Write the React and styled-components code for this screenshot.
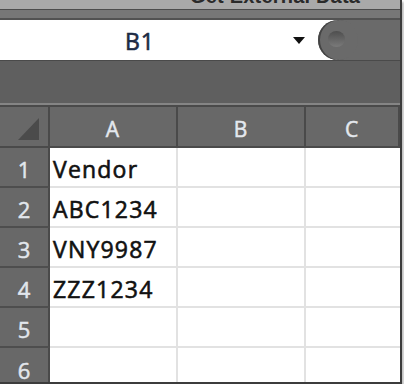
import React from 'react'
import styled, { createGlobalStyle } from 'styled-components'

const GlobalStyle = createGlobalStyle`
  html, body { margin: 0; padding: 0; background: #ffffff; }
  body { font-family: "Open Sans", "Liberation Sans", sans-serif; }
`

const columns = ['A', 'B', 'C']
const rows = [
  { n: 1, a: 'Vendor' },
  { n: 2, a: 'ABC1234' },
  { n: 3, a: 'VNY9987' },
  { n: 4, a: 'ZZZ1234' },
  { n: 5, a: '' },
  { n: 6, a: '' },
]

function App() {
  return (
    <>
      <GlobalStyle />
      <Frame>
        <TitleStrip>
          <TitleText>Get External Data</TitleText>
        </TitleStrip>
        <RibbonBand />
        <NameRow>
          <NameBox>
            <CellRef>B1</CellRef>
            <DropArrow />
          </NameBox>
          <RoundButton>
            <Knob />
          </RoundButton>
        </NameRow>
        <FormulaBand />
        <Sheet>
          <Corner>
            <svg width="22" height="23" viewBox="0 0 22 23">
              <polygon points="21,0 21,22 0,22" fill="#4b4b4b" />
            </svg>
          </Corner>
          {columns.map(c => (
            <ColHead key={c}>{c}</ColHead>
          ))}
          {rows.map(r => (
            <React.Fragment key={r.n}>
              <RowHead last={r.n === 6}>{r.n}</RowHead>
              <Cell last={r.n === 6}>{r.a}</Cell>
              <Cell last={r.n === 6} />
              <Cell last={r.n === 6} edge />
            </React.Fragment>
          ))}
        </Sheet>
      </Frame>
    </>
  )
}

export default App

const Frame = styled.div`
  width: 400px;
  height: 382px;
  display: flex;
  flex-direction: column;
  overflow: hidden;
  border-right: 2px solid #3c3c3c;
  border-bottom: 2px solid #3c3c3c;
  box-shadow: 2px 2px 2px rgba(0, 0, 0, 0.25);
  background: #686868;
  & > * { flex-shrink: 0; }
`

const TitleStrip = styled.div`
  height: 9px;
  background: #a9a9a9;
  border-bottom: 1px solid #4c4c4c;
  overflow: hidden;
`

const TitleText = styled.div`
  margin: -16px 0 0 190px;
  font-family: "Liberation Sans", sans-serif;
  font-weight: bold;
  font-size: 20px;
  line-height: 24px;
  color: #2a2a2a;
  letter-spacing: 0.2px;
  white-space: nowrap;
`

const RibbonBand = styled.div`
  height: 8px;
  background: #777777;
  border-bottom: 2px solid #525252;
`

const NameRow = styled.div`
  height: 40px;
  display: flex;
  background: #6a6a6a;
  border-bottom: 1px solid #4a4a4a;
`

const NameBox = styled.div`
  width: 338px;
  background: #ffffff;
  display: flex;
  align-items: center;
`

const CellRef = styled.div`
  width: 280px;
  text-align: center;
  font-size: 23px;
  letter-spacing: 1px;
  color: #1d2b45;
  -webkit-text-stroke: 0.6px #1d2b45;
  padding-top: 1px;
`

const DropArrow = styled.div`
  margin-left: 13px;
  width: 0;
  height: 0;
  border-left: 6px solid transparent;
  border-right: 6px solid transparent;
  border-top: 7px solid #111;
`

const RoundButton = styled.div`
  width: 40px;
  height: 40px;
  margin-left: -20px;
  border-radius: 50%;
  background: #6a6a6a;
  box-shadow: inset 2px 0 0 #444;
  display: flex;
  align-items: center;
  justify-content: center;
  z-index: 1;
`

const Knob = styled.div`
  width: 17px;
  height: 16px;
  margin: -3px 0 0 -4px;
  border-radius: 50%;
  background: linear-gradient(#4e4e4e, #7a7a7a);
`

const FormulaBand = styled.div`
  height: 42px;
  background: #5f5f5f;
  border-bottom: 2px solid #858585;
`

const Sheet = styled.div`
  height: 275px;
  overflow: hidden;
  display: grid;
  grid-template-columns: 50px 128px 128px 1fr;
  grid-template-rows: 41px repeat(6, 40px);
  background: #ffffff;
  border-top: 2px solid #4a4a4a;
`

const Corner = styled.div`
  background: #686868;
  border-right: 2px solid #4a4a4a;
  border-bottom: 2px solid #4a4a4a;
  display: flex;
  align-items: flex-end;
  justify-content: flex-end;
  padding: 0 8px 5px 0;
`

const ColHead = styled.div`
  background: #686868;
  border-right: 2px solid #4a4a4a;
  border-bottom: 2px solid #4a4a4a;
  color: #e4e8ee;
  -webkit-text-stroke: 0.5px #e4e8ee;
  font-size: 21px;
  letter-spacing: 1px;
  display: flex;
  align-items: center;
  justify-content: center;
  padding-top: 5px;
  &:last-of-type { border-right: 0; }
`

const RowHead = styled.div`
  background: #686868;
  border-right: 2px solid #4a4a4a;
  border-bottom: ${p => (p.last ? '0' : '2px solid #4e4e4e')};
  color: #e2e6ec;
  -webkit-text-stroke: 0.5px #e2e6ec;
  font-size: 22px;
  display: flex;
  align-items: center;
  justify-content: center;
  padding-top: 3px;
`

const Cell = styled.div`
  border-right: ${p => (p.edge ? '0' : '2px solid #e2e2e2')};
  border-bottom: ${p => (p.last ? '0' : '2px solid #e2e2e2')};
  color: #111;
  -webkit-text-stroke: 0.6px #111;
  font-size: 23px;
  letter-spacing: 1.2px;
  display: flex;
  align-items: center;
  padding: 3px 0 0 3px;
`
